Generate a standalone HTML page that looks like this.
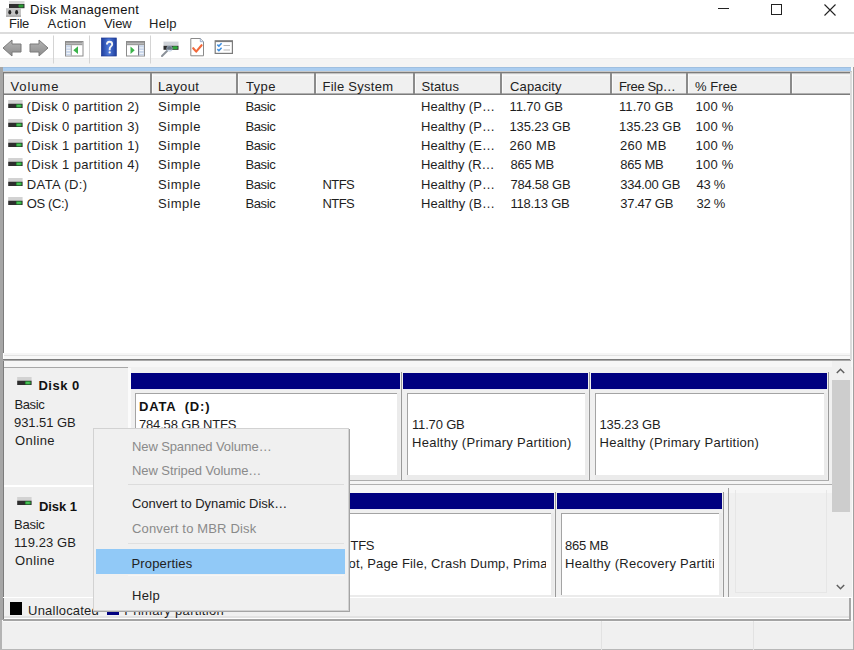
<!DOCTYPE html><html><head><meta charset='utf-8'><style>
*{margin:0;padding:0;box-sizing:border-box}
html,body{width:854px;height:650px;overflow:hidden;background:#fff}
body{position:relative;font-family:"Liberation Sans",sans-serif;color:#000}
.t{position:absolute;white-space:pre}
.r{position:absolute}
.c{position:absolute;overflow:hidden}
svg{position:absolute;overflow:visible}
</style></head><body>
<div class="t" style="left:30.00px;top:3.20px;font-size:13px;line-height:13px;color:#111;letter-spacing:0.286px;">Disk Management</div>
<div class="r" style="left:718px;top:8px;width:11px;height:1px;background:#222;"></div>
<div class="r" style="left:771px;top:4px;width:11px;height:11px;background:transparent;border:1px solid #222"></div>
<svg style="left:824px;top:4px" width="12" height="12"><path d="M0.5 0.5L11.5 11.5M11.5 0.5L0.5 11.5" stroke="#222" stroke-width="1.1"/></svg>
<div class="t" style="left:9.00px;top:17.20px;font-size:13px;line-height:13px;color:#222;letter-spacing:-0.199px;">File</div>
<div class="t" style="left:47.50px;top:17.20px;font-size:13px;line-height:13px;color:#222;letter-spacing:0.480px;">Action</div>
<div class="t" style="left:104.00px;top:17.20px;font-size:13px;line-height:13px;color:#222;letter-spacing:-0.067px;">View</div>
<div class="t" style="left:149.00px;top:17.20px;font-size:13px;line-height:13px;color:#222;letter-spacing:0.268px;">Help</div>
<div class="r" style="left:0px;top:32px;width:854px;height:2px;background:#dcdcdc;"></div>
<div class="r" style="left:0px;top:58px;width:854px;height:1px;background:#efefef;"></div>
<div class="r" style="left:0px;top:59px;width:854px;height:8px;background:#f4f4f4;"></div>
<div class="r" style="left:2px;top:67px;width:850px;height:1px;background:#9fbfe0;"></div>
<div class="r" style="left:2px;top:68px;width:850px;height:3px;background:#aacdf0;"></div>
<div class="r" style="left:0px;top:67px;width:3px;height:553px;background:#a6a6a6;"></div>
<div class="r" style="left:853px;top:67px;width:1px;height:553px;background:#a0a0a0;"></div>
<div class="r" style="left:851px;top:67px;width:2px;height:553px;background:#fafafa;"></div>
<div class="r" style="left:3px;top:71px;width:849px;height:1px;background:#c8c8c8;"></div>
<div class="r" style="left:3px;top:72px;width:848px;height:1px;background:#7c7c7c;"></div>
<div class="r" style="left:3px;top:72px;width:1px;height:281px;background:#7c7c7c;"></div>
<div class="r" style="left:4px;top:73px;width:847px;height:21px;background:#f0f0f0;"></div>
<div class="r" style="left:4px;top:73px;width:847px;height:1px;background:#c4c4c4;"></div>
<div class="r" style="left:4px;top:75px;width:847px;height:1px;background:#f7f7f7;"></div>
<div class="r" style="left:4px;top:93px;width:847px;height:1px;background:#b0b0b0;"></div>
<div class="r" style="left:4px;top:94px;width:847px;height:1px;background:#7c7c7c;"></div>
<div class="r" style="left:150px;top:73px;width:2px;height:21px;background:#8a8a8a;"></div>
<div class="r" style="left:152px;top:74px;width:1px;height:19px;background:#fafafa;"></div>
<div class="r" style="left:236px;top:73px;width:2px;height:21px;background:#8a8a8a;"></div>
<div class="r" style="left:238px;top:74px;width:1px;height:19px;background:#fafafa;"></div>
<div class="r" style="left:314px;top:73px;width:2px;height:21px;background:#8a8a8a;"></div>
<div class="r" style="left:316px;top:74px;width:1px;height:19px;background:#fafafa;"></div>
<div class="r" style="left:413px;top:73px;width:2px;height:21px;background:#8a8a8a;"></div>
<div class="r" style="left:415px;top:74px;width:1px;height:19px;background:#fafafa;"></div>
<div class="r" style="left:500px;top:73px;width:2px;height:21px;background:#8a8a8a;"></div>
<div class="r" style="left:502px;top:74px;width:1px;height:19px;background:#fafafa;"></div>
<div class="r" style="left:610px;top:73px;width:2px;height:21px;background:#8a8a8a;"></div>
<div class="r" style="left:612px;top:74px;width:1px;height:19px;background:#fafafa;"></div>
<div class="r" style="left:686px;top:73px;width:2px;height:21px;background:#8a8a8a;"></div>
<div class="r" style="left:688px;top:74px;width:1px;height:19px;background:#fafafa;"></div>
<div class="r" style="left:790px;top:73px;width:2px;height:21px;background:#8a8a8a;"></div>
<div class="r" style="left:792px;top:74px;width:1px;height:19px;background:#fafafa;"></div>
<div class="t" style="left:10.50px;top:79.70px;font-size:13px;line-height:13px;color:#222;letter-spacing:0.920px;">Volume</div>
<div class="t" style="left:158.00px;top:79.70px;font-size:13px;line-height:13px;color:#222;letter-spacing:0.360px;">Layout</div>
<div class="t" style="left:246.00px;top:79.70px;font-size:13px;line-height:13px;color:#222;letter-spacing:0.400px;">Type</div>
<div class="t" style="left:322.50px;top:79.70px;font-size:13px;line-height:13px;color:#222;letter-spacing:0.260px;">File System</div>
<div class="t" style="left:421.50px;top:79.70px;font-size:13px;line-height:13px;color:#222;letter-spacing:0.120px;">Status</div>
<div class="t" style="left:510.00px;top:79.70px;font-size:13px;line-height:13px;color:#222;letter-spacing:0.143px;">Capacity</div>
<div class="t" style="left:619.00px;top:79.70px;font-size:13px;line-height:13px;color:#222;letter-spacing:-0.371px;">Free Sp…</div>
<div class="t" style="left:695.00px;top:79.70px;font-size:13px;line-height:13px;color:#222;letter-spacing:0.080px;">% Free</div>
<svg style="left:8px;top:100.0px" width="16" height="9"><rect x="0.2" y="0" width="14.4" height="3.7" fill="#d2d2d2"/><rect x="0.2" y="3.7" width="14.4" height="4.3" fill="#2e2e2e"/><rect x="8.0" y="4.2" width="5.8" height="3.4" rx="1" fill="#279a35"/><rect x="9.1" y="5" width="3.6" height="1.8" fill="#4cc35a"/></svg>
<div class="t" style="left:26.60px;top:100.20px;font-size:13px;line-height:13px;color:#1e1e1e;letter-spacing:0.372px;">(Disk 0 partition 2)</div>
<div class="t" style="left:158.00px;top:100.20px;font-size:13px;line-height:13px;color:#1e1e1e;letter-spacing:0.560px;">Simple</div>
<div class="t" style="left:245.50px;top:100.20px;font-size:13px;line-height:13px;color:#1e1e1e;letter-spacing:-0.400px;">Basic</div>
<div class="t" style="left:421.00px;top:100.20px;font-size:13px;line-height:13px;color:#1e1e1e;letter-spacing:0.020px;">Healthy (P…</div>
<div class="t" style="left:509.50px;top:100.20px;font-size:13px;line-height:13px;color:#1e1e1e;letter-spacing:-0.078px;">11.70 GB</div>
<div class="t" style="left:619.00px;top:100.20px;font-size:13px;line-height:13px;color:#1e1e1e;letter-spacing:0.065px;">11.70 GB</div>
<div class="t" style="left:695.50px;top:100.20px;font-size:13px;line-height:13px;color:#1e1e1e;letter-spacing:0.250px;">100 %</div>
<svg style="left:8px;top:119.4px" width="16" height="9"><rect x="0.2" y="0" width="14.4" height="3.7" fill="#d2d2d2"/><rect x="0.2" y="3.7" width="14.4" height="4.3" fill="#2e2e2e"/><rect x="8.0" y="4.2" width="5.8" height="3.4" rx="1" fill="#279a35"/><rect x="9.1" y="5" width="3.6" height="1.8" fill="#4cc35a"/></svg>
<div class="t" style="left:26.60px;top:119.60px;font-size:13px;line-height:13px;color:#1e1e1e;letter-spacing:0.372px;">(Disk 0 partition 3)</div>
<div class="t" style="left:158.00px;top:119.60px;font-size:13px;line-height:13px;color:#1e1e1e;letter-spacing:0.560px;">Simple</div>
<div class="t" style="left:245.50px;top:119.60px;font-size:13px;line-height:13px;color:#1e1e1e;letter-spacing:-0.400px;">Basic</div>
<div class="t" style="left:421.00px;top:119.60px;font-size:13px;line-height:13px;color:#1e1e1e;letter-spacing:0.020px;">Healthy (P…</div>
<div class="t" style="left:509.50px;top:119.60px;font-size:13px;line-height:13px;color:#1e1e1e;letter-spacing:-0.125px;">135.23 GB</div>
<div class="t" style="left:619.00px;top:119.60px;font-size:13px;line-height:13px;color:#1e1e1e;">135.23 GB</div>
<div class="t" style="left:695.50px;top:119.60px;font-size:13px;line-height:13px;color:#1e1e1e;letter-spacing:0.250px;">100 %</div>
<svg style="left:8px;top:138.8px" width="16" height="9"><rect x="0.2" y="0" width="14.4" height="3.7" fill="#d2d2d2"/><rect x="0.2" y="3.7" width="14.4" height="4.3" fill="#2e2e2e"/><rect x="8.0" y="4.2" width="5.8" height="3.4" rx="1" fill="#279a35"/><rect x="9.1" y="5" width="3.6" height="1.8" fill="#4cc35a"/></svg>
<div class="t" style="left:26.60px;top:139.00px;font-size:13px;line-height:13px;color:#1e1e1e;letter-spacing:0.372px;">(Disk 1 partition 1)</div>
<div class="t" style="left:158.00px;top:139.00px;font-size:13px;line-height:13px;color:#1e1e1e;letter-spacing:0.560px;">Simple</div>
<div class="t" style="left:245.50px;top:139.00px;font-size:13px;line-height:13px;color:#1e1e1e;letter-spacing:-0.400px;">Basic</div>
<div class="t" style="left:421.00px;top:139.00px;font-size:13px;line-height:13px;color:#1e1e1e;letter-spacing:0.020px;">Healthy (E…</div>
<div class="t" style="left:509.50px;top:139.00px;font-size:13px;line-height:13px;color:#1e1e1e;letter-spacing:0.310px;">260 MB</div>
<div class="t" style="left:620.00px;top:139.00px;font-size:13px;line-height:13px;color:#1e1e1e;letter-spacing:0.310px;">260 MB</div>
<div class="t" style="left:695.50px;top:139.00px;font-size:13px;line-height:13px;color:#1e1e1e;letter-spacing:0.250px;">100 %</div>
<svg style="left:8px;top:158.2px" width="16" height="9"><rect x="0.2" y="0" width="14.4" height="3.7" fill="#d2d2d2"/><rect x="0.2" y="3.7" width="14.4" height="4.3" fill="#2e2e2e"/><rect x="8.0" y="4.2" width="5.8" height="3.4" rx="1" fill="#279a35"/><rect x="9.1" y="5" width="3.6" height="1.8" fill="#4cc35a"/></svg>
<div class="t" style="left:26.60px;top:158.40px;font-size:13px;line-height:13px;color:#1e1e1e;letter-spacing:0.372px;">(Disk 1 partition 4)</div>
<div class="t" style="left:158.00px;top:158.40px;font-size:13px;line-height:13px;color:#1e1e1e;letter-spacing:0.560px;">Simple</div>
<div class="t" style="left:245.50px;top:158.40px;font-size:13px;line-height:13px;color:#1e1e1e;letter-spacing:-0.400px;">Basic</div>
<div class="t" style="left:421.00px;top:158.40px;font-size:13px;line-height:13px;color:#1e1e1e;letter-spacing:-0.080px;">Healthy (R…</div>
<div class="t" style="left:510.50px;top:158.40px;font-size:13px;line-height:13px;color:#1e1e1e;letter-spacing:-0.250px;">865 MB</div>
<div class="t" style="left:620.20px;top:158.40px;font-size:13px;line-height:13px;color:#1e1e1e;letter-spacing:-0.250px;">865 MB</div>
<div class="t" style="left:695.50px;top:158.40px;font-size:13px;line-height:13px;color:#1e1e1e;letter-spacing:0.250px;">100 %</div>
<svg style="left:8px;top:177.6px" width="16" height="9"><rect x="0.2" y="0" width="14.4" height="3.7" fill="#d2d2d2"/><rect x="0.2" y="3.7" width="14.4" height="4.3" fill="#2e2e2e"/><rect x="8.0" y="4.2" width="5.8" height="3.4" rx="1" fill="#279a35"/><rect x="9.1" y="5" width="3.6" height="1.8" fill="#4cc35a"/></svg>
<div class="t" style="left:26.80px;top:177.80px;font-size:13px;line-height:13px;color:#1e1e1e;letter-spacing:0.375px;">DATA (D:)</div>
<div class="t" style="left:158.00px;top:177.80px;font-size:13px;line-height:13px;color:#1e1e1e;letter-spacing:0.560px;">Simple</div>
<div class="t" style="left:245.50px;top:177.80px;font-size:13px;line-height:13px;color:#1e1e1e;letter-spacing:-0.400px;">Basic</div>
<div class="t" style="left:322.50px;top:177.80px;font-size:13px;line-height:13px;color:#1e1e1e;letter-spacing:-0.600px;">NTFS</div>
<div class="t" style="left:421.00px;top:177.80px;font-size:13px;line-height:13px;color:#1e1e1e;letter-spacing:0.020px;">Healthy (P…</div>
<div class="t" style="left:510.50px;top:177.80px;font-size:13px;line-height:13px;color:#1e1e1e;letter-spacing:-0.250px;">784.58 GB</div>
<div class="t" style="left:620.20px;top:177.80px;font-size:13px;line-height:13px;color:#1e1e1e;letter-spacing:-0.250px;">334.00 GB</div>
<div class="t" style="left:696.50px;top:177.80px;font-size:13px;line-height:13px;color:#1e1e1e;letter-spacing:-0.250px;">43 %</div>
<svg style="left:8px;top:197.0px" width="16" height="9"><rect x="0.2" y="0" width="14.4" height="3.7" fill="#d2d2d2"/><rect x="0.2" y="3.7" width="14.4" height="4.3" fill="#2e2e2e"/><rect x="8.0" y="4.2" width="5.8" height="3.4" rx="1" fill="#279a35"/><rect x="9.1" y="5" width="3.6" height="1.8" fill="#4cc35a"/></svg>
<div class="t" style="left:26.80px;top:197.20px;font-size:13px;line-height:13px;color:#1e1e1e;letter-spacing:-0.366px;">OS (C:)</div>
<div class="t" style="left:158.00px;top:197.20px;font-size:13px;line-height:13px;color:#1e1e1e;letter-spacing:0.560px;">Simple</div>
<div class="t" style="left:245.50px;top:197.20px;font-size:13px;line-height:13px;color:#1e1e1e;letter-spacing:-0.400px;">Basic</div>
<div class="t" style="left:322.50px;top:197.20px;font-size:13px;line-height:13px;color:#1e1e1e;letter-spacing:-0.600px;">NTFS</div>
<div class="t" style="left:421.00px;top:197.20px;font-size:13px;line-height:13px;color:#1e1e1e;letter-spacing:0.020px;">Healthy (B…</div>
<div class="t" style="left:510.50px;top:197.20px;font-size:13px;line-height:13px;color:#1e1e1e;letter-spacing:-0.250px;">118.13 GB</div>
<div class="t" style="left:620.20px;top:197.20px;font-size:13px;line-height:13px;color:#1e1e1e;letter-spacing:-0.250px;">37.47 GB</div>
<div class="t" style="left:696.50px;top:197.20px;font-size:13px;line-height:13px;color:#1e1e1e;letter-spacing:-0.250px;">32 %</div>
<div class="r" style="left:4px;top:353px;width:847px;height:2px;background:#f6f6f6;"></div>
<div class="r" style="left:4px;top:355px;width:847px;height:1px;background:#e2e2e2;"></div>
<div class="r" style="left:4px;top:356px;width:848px;height:3px;background:#f8f8f8;"></div>
<div class="r" style="left:3px;top:359px;width:848px;height:1px;background:#7c7c7c;"></div>
<div class="r" style="left:3px;top:360px;width:848px;height:1px;background:#a8a8a8;"></div>
<div class="r" style="left:4px;top:361px;width:848px;height:6px;background:#f6f6f6;"></div>
<div class="r" style="left:850px;top:72px;width:2px;height:288px;background:#dcdcdc;"></div>
<div class="r" style="left:3px;top:367px;width:849px;height:231px;background:#f0f0f0;"></div>
<div class="r" style="left:3px;top:361px;width:1px;height:259px;background:#7c7c7c;"></div>
<div class="r" style="left:4px;top:367px;width:124px;height:1px;background:#a8a8a8;"></div>
<div class="r" style="left:4px;top:485px;width:124px;height:2px;background:#ffffff;"></div>
<div class="r" style="left:128px;top:368px;width:3px;height:229px;background:#fbfbfb;"></div>
<div class="r" style="left:131px;top:373px;width:269px;height:16px;background:#000080;"></div>
<div class="r" style="left:131px;top:389px;width:269px;height:1px;background:#e8e8f4;"></div>
<div class="r" style="left:401px;top:372px;width:1px;height:108px;background:#9a9a9a;"></div>
<div class="r" style="left:135px;top:393px;width:265px;height:87px;background:#ebebeb;"></div>
<div class="r" style="left:135px;top:393px;width:262px;height:1px;background:#a4a4a4;"></div>
<div class="r" style="left:135px;top:393px;width:1px;height:82px;background:#a4a4a4;"></div>
<div class="r" style="left:136px;top:394px;width:261px;height:81px;background:#ffffff;"></div>
<div class="r" style="left:403px;top:373px;width:185px;height:16px;background:#000080;"></div>
<div class="r" style="left:403px;top:389px;width:185px;height:1px;background:#e8e8f4;"></div>
<div class="r" style="left:589px;top:372px;width:1px;height:108px;background:#9a9a9a;"></div>
<div class="r" style="left:407px;top:393px;width:181px;height:87px;background:#ebebeb;"></div>
<div class="r" style="left:407px;top:393px;width:178px;height:1px;background:#a4a4a4;"></div>
<div class="r" style="left:407px;top:393px;width:1px;height:82px;background:#a4a4a4;"></div>
<div class="r" style="left:408px;top:394px;width:177px;height:81px;background:#ffffff;"></div>
<div class="r" style="left:591px;top:373px;width:236px;height:16px;background:#000080;"></div>
<div class="r" style="left:591px;top:389px;width:236px;height:1px;background:#e8e8f4;"></div>
<div class="r" style="left:828px;top:372px;width:1px;height:108px;background:#9a9a9a;"></div>
<div class="r" style="left:595px;top:393px;width:232px;height:87px;background:#ebebeb;"></div>
<div class="r" style="left:595px;top:393px;width:229px;height:1px;background:#a4a4a4;"></div>
<div class="r" style="left:595px;top:393px;width:1px;height:82px;background:#a4a4a4;"></div>
<div class="r" style="left:596px;top:394px;width:228px;height:81px;background:#ffffff;"></div>
<div class="r" style="left:131px;top:481px;width:698px;height:3px;background:#f4f4f4;"></div>
<div class="r" style="left:131px;top:485px;width:701px;height:8px;background:#f6f6f6;"></div>
<div class="r" style="left:131px;top:480px;width:698px;height:1px;background:#acacac;"></div>
<div class="r" style="left:131px;top:484px;width:701px;height:1px;background:#b0b0b0;"></div>
<div class="t" style="left:139.00px;top:400.20px;font-size:13px;line-height:13px;font-weight:700;color:#111;letter-spacing:0.801px;">DATA  (D:)</div>
<div class="t" style="left:139.00px;top:417.90px;font-size:13px;line-height:13px;color:#1e1e1e;letter-spacing:-0.170px;">784.58 GB NTFS</div>
<div class="t" style="left:412.00px;top:418.20px;font-size:13px;line-height:13px;color:#1e1e1e;letter-spacing:-0.172px;">11.70 GB</div>
<div class="t" style="left:412.00px;top:436.20px;font-size:13px;line-height:13px;color:#1e1e1e;letter-spacing:0.269px;">Healthy (Primary Partition)</div>
<div class="t" style="left:599.50px;top:418.20px;font-size:13px;line-height:13px;color:#1e1e1e;letter-spacing:-0.125px;">135.23 GB</div>
<div class="t" style="left:599.50px;top:436.20px;font-size:13px;line-height:13px;color:#1e1e1e;letter-spacing:0.269px;">Healthy (Primary Partition)</div>
<svg style="left:17px;top:377px" width="16" height="9"><rect x="0.2" y="0" width="14.4" height="3.7" fill="#d2d2d2"/><rect x="0.2" y="3.7" width="14.4" height="4.3" fill="#2e2e2e"/><rect x="8.0" y="4.2" width="5.8" height="3.4" rx="1" fill="#279a35"/><rect x="9.1" y="5" width="3.6" height="1.8" fill="#4cc35a"/></svg>
<div class="t" style="left:38.50px;top:379.20px;font-size:13px;line-height:13px;font-weight:700;color:#111;letter-spacing:0.480px;">Disk 0</div>
<div class="t" style="left:14.50px;top:397.70px;font-size:13px;line-height:13px;color:#1e1e1e;letter-spacing:-0.400px;">Basic</div>
<div class="t" style="left:14.00px;top:415.80px;font-size:13px;line-height:13px;color:#1e1e1e;letter-spacing:-0.048px;">931.51 GB</div>
<div class="t" style="left:15.00px;top:434.20px;font-size:13px;line-height:13px;color:#1e1e1e;letter-spacing:0.400px;">Online</div>
<div class="c" style="left:0;top:0;width:854px;height:597px"><div class="r" style="left:131px;top:493px;width:137px;height:16px;background:#000080;"></div>
<div class="r" style="left:131px;top:509px;width:137px;height:1px;background:#e8e8f4;"></div>
<div class="r" style="left:269px;top:492px;width:1px;height:108px;background:#9a9a9a;"></div>
<div class="r" style="left:135px;top:513px;width:133px;height:87px;background:#ebebeb;"></div>
<div class="r" style="left:135px;top:513px;width:130px;height:1px;background:#a4a4a4;"></div>
<div class="r" style="left:135px;top:513px;width:1px;height:82px;background:#a4a4a4;"></div>
<div class="r" style="left:136px;top:514px;width:129px;height:81px;background:#ffffff;"></div>
<div class="r" style="left:271px;top:493px;width:283px;height:16px;background:#000080;"></div>
<div class="r" style="left:271px;top:509px;width:283px;height:1px;background:#e8e8f4;"></div>
<div class="r" style="left:555px;top:492px;width:1px;height:108px;background:#9a9a9a;"></div>
<div class="r" style="left:275px;top:513px;width:279px;height:87px;background:#ebebeb;"></div>
<div class="r" style="left:275px;top:513px;width:276px;height:1px;background:#a4a4a4;"></div>
<div class="r" style="left:275px;top:513px;width:1px;height:82px;background:#a4a4a4;"></div>
<div class="r" style="left:276px;top:514px;width:275px;height:81px;background:#ffffff;"></div>
<div class="r" style="left:557px;top:493px;width:165px;height:16px;background:#000080;"></div>
<div class="r" style="left:557px;top:509px;width:165px;height:1px;background:#e8e8f4;"></div>
<div class="r" style="left:723px;top:492px;width:1px;height:108px;background:#9a9a9a;"></div>
<div class="r" style="left:561px;top:513px;width:161px;height:87px;background:#ebebeb;"></div>
<div class="r" style="left:561px;top:513px;width:158px;height:1px;background:#a4a4a4;"></div>
<div class="r" style="left:561px;top:513px;width:1px;height:82px;background:#a4a4a4;"></div>
<div class="r" style="left:562px;top:514px;width:157px;height:81px;background:#ffffff;"></div>
<div class="r" style="left:728px;top:488px;width:1px;height:110px;background:#a0a0a0;"></div>
<div class="r" style="left:735px;top:490px;width:1px;height:103px;background:#e6e6e6;"></div>
<div class="r" style="left:826px;top:490px;width:1px;height:103px;background:#e6e6e6;"></div>
<div class="r" style="left:735px;top:592px;width:92px;height:1px;background:#e6e6e6;"></div>
</div>
<div class="c" style="left:279px;top:515px;width:266.5px;height:80px"><div class="t" style="left:0.00px;top:23.70px;font-size:13px;line-height:13px;color:#1e1e1e;letter-spacing:-0.250px;">118.13 GB NTFS</div>
<div class="t" style="left:0.00px;top:41.70px;font-size:13px;line-height:13px;color:#1e1e1e;letter-spacing:0.150px;">Healthy (Boot, Page File, Crash Dump, Primary Partition)</div>
</div>
<div class="c" style="left:565px;top:515px;width:149px;height:80px"><div class="t" style="left:0.00px;top:23.70px;font-size:13px;line-height:13px;color:#1e1e1e;letter-spacing:-0.250px;">865 MB</div>
<div class="t" style="left:0.00px;top:41.70px;font-size:13px;line-height:13px;color:#1e1e1e;letter-spacing:0.250px;">Healthy (Recovery Partition)</div>
</div>
<svg style="left:17px;top:497px" width="16" height="9"><rect x="0.2" y="0" width="14.4" height="3.7" fill="#d2d2d2"/><rect x="0.2" y="3.7" width="14.4" height="4.3" fill="#2e2e2e"/><rect x="8.0" y="4.2" width="5.8" height="3.4" rx="1" fill="#279a35"/><rect x="9.1" y="5" width="3.6" height="1.8" fill="#4cc35a"/></svg>
<div class="t" style="left:39.00px;top:499.60px;font-size:13px;line-height:13px;font-weight:700;color:#111;letter-spacing:-0.080px;">Disk 1</div>
<div class="t" style="left:14.00px;top:517.70px;font-size:13px;line-height:13px;color:#1e1e1e;letter-spacing:-0.250px;">Basic</div>
<div class="t" style="left:14.00px;top:535.70px;font-size:13px;line-height:13px;color:#1e1e1e;letter-spacing:0.077px;">119.23 GB</div>
<div class="t" style="left:15.00px;top:554.20px;font-size:13px;line-height:13px;color:#1e1e1e;letter-spacing:0.400px;">Online</div>
<div class="r" style="left:832px;top:361px;width:19px;height:237px;background:#f0f0f0;"></div>
<svg style="left:836px;top:368px" width="9" height="6"><path d="M0.8 5L4.5 1.3L8.2 5" fill="none" stroke="#606060" stroke-width="1.5"/></svg>
<div class="r" style="left:832px;top:380px;width:18px;height:132px;background:#cdcdcd;"></div>
<svg style="left:836px;top:584px" width="9" height="6"><path d="M0.8 1L4.5 4.7L8.2 1" fill="none" stroke="#606060" stroke-width="1.5"/></svg>
<div class="r" style="left:3px;top:597px;width:849px;height:1px;background:#ffffff;"></div>
<div class="r" style="left:4px;top:598px;width:846px;height:20px;background:#f0f0f0;"></div>
<div class="r" style="left:849px;top:598px;width:2px;height:21px;background:#a8a8a8;"></div>
<div class="r" style="left:4px;top:616px;width:845px;height:2px;background:#e2e2e2;"></div>
<div class="r" style="left:3px;top:619px;width:848px;height:2px;background:#a4a4a4;"></div>
<div class="r" style="left:10px;top:602px;width:12px;height:13px;background:#000;"></div>
<div class="t" style="left:28.10px;top:603.70px;font-size:13px;line-height:13px;color:#1e1e1e;letter-spacing:0.200px;">Unallocated</div>
<div class="r" style="left:107px;top:603px;width:12px;height:12px;background:#000080;"></div>
<div class="t" style="left:124.30px;top:603.70px;font-size:13px;line-height:13px;color:#1e1e1e;letter-spacing:0.300px;">Primary partition</div>
<div class="r" style="left:0px;top:621px;width:854px;height:29px;background:#f0f0f0;"></div>
<div class="r" style="left:3px;top:621px;width:849px;height:1px;background:#f8f8f8;"></div>
<div class="r" style="left:0px;top:620px;width:2px;height:30px;background:#b4b4b4;"></div>
<div class="r" style="left:0px;top:649px;width:854px;height:1px;background:#b8b8b8;"></div>
<div class="r" style="left:601px;top:621px;width:1px;height:29px;background:#e2e2e2;"></div>
<div class="r" style="left:753px;top:621px;width:1px;height:29px;background:#e2e2e2;"></div>
<div class="r" style="left:853px;top:620px;width:1px;height:30px;background:#b0b0b0;"></div>
<div class="r" style="left:93px;top:428px;width:256px;height:183px;background:#f0f0f0;border:1px solid #d2d2d2;box-shadow:1px 1px 0 #a4a4a4"></div>
<div class="t" style="left:132.00px;top:440.00px;font-size:13px;line-height:13px;color:#8a8a8a;letter-spacing:-0.111px;">New Spanned Volume…</div>
<div class="t" style="left:132.00px;top:464.20px;font-size:13px;line-height:13px;color:#8a8a8a;letter-spacing:-0.079px;">New Striped Volume…</div>
<div class="r" style="left:128px;top:484px;width:216px;height:1px;background:#dcdcdc;"></div>
<div class="t" style="left:132.00px;top:497.20px;font-size:13px;line-height:13px;color:#222;letter-spacing:-0.034px;">Convert to Dynamic Disk…</div>
<div class="t" style="left:132.00px;top:522.20px;font-size:13px;line-height:13px;color:#8a8a8a;letter-spacing:0.155px;">Convert to MBR Disk</div>
<div class="r" style="left:128px;top:543px;width:216px;height:1px;background:#e0e0e0;"></div>
<div class="r" style="left:96px;top:549px;width:249px;height:25px;background:#91c9f7;"></div>
<div class="t" style="left:131.50px;top:556.70px;font-size:13px;line-height:13px;color:#222;letter-spacing:0.155px;">Properties</div>
<div class="r" style="left:128px;top:575px;width:216px;height:1px;background:#f6f6f6;"></div>
<div class="t" style="left:132.00px;top:589.20px;font-size:13px;line-height:13px;color:#222;letter-spacing:0.334px;">Help</div>
<svg style="left:0;top:0" width="854" height="66"><defs><linearGradient id="hb" x1="0" y1="0" x2="1" y2="0"><stop offset="0" stop-color="#1f3f9e"/><stop offset="0.5" stop-color="#4d78d8"/><stop offset="1" stop-color="#1f3f9e"/></linearGradient><linearGradient id="ar" x1="0" y1="0" x2="0" y2="1"><stop offset="0" stop-color="#b4b4b4"/><stop offset="1" stop-color="#8c8c8c"/></linearGradient></defs><rect x="9" y="1" width="15.5" height="3" fill="#d8d8d8"/><rect x="9" y="4" width="15.5" height="4.2" fill="#303030"/><rect x="18.5" y="4.6" width="5" height="3" rx="1" fill="#2b9a35"/><rect x="6" y="8.2" width="15" height="8.5" fill="#c4c4c4"/><rect x="6" y="15.5" width="15" height="1.2" fill="#a0a0a0"/><ellipse cx="9.8" cy="12.2" rx="1.5" ry="2.2" fill="#262626"/><ellipse cx="16.6" cy="12.2" rx="1.5" ry="2.2" fill="#262626"/><path d="M3 48L12 40V44H21V52H12V56Z" fill="url(#ar)" stroke="#7a7a7a" stroke-width="1" stroke-linejoin="round"/><path d="M48 48L39 40V44H30V52H39V56Z" fill="url(#ar)" stroke="#7a7a7a" stroke-width="1" stroke-linejoin="round"/><rect x="53" y="35.5" width="1" height="28" fill="#d4d4d4"/><rect x="65.5" y="41.5" width="17.5" height="14.5" fill="#fff" stroke="#8c8c8c"/><rect x="66" y="42" width="16.5" height="3.2" fill="#9c9c9c"/><rect x="66" y="43.2" width="16.5" height="0.8" fill="#c0c0c0"/><rect x="66" y="45.2" width="4.8" height="10.3" fill="#c9d6ea"/><rect x="66.5" y="47.5" width="4" height="0.8" fill="#fff"/><rect x="66.5" y="50.2" width="4" height="0.8" fill="#fff"/><rect x="66.5" y="52.9" width="4" height="0.8" fill="#fff"/><rect x="70.8" y="45.2" width="1" height="10.3" fill="#9a9a9a"/><path d="M78 46.3L73.3 50.2L78 54Z" fill="#3bb34a"/><rect x="89" y="35.5" width="1" height="28" fill="#d4d4d4"/><rect x="101.5" y="38" width="14.8" height="18" fill="url(#hb)"/><rect x="101.5" y="38" width="14.8" height="18" fill="none" stroke="#1a3590" stroke-width="0.7"/><path d="M106.9 44.6C106.9 42.5 108.2 41.7 109.5 41.7C111 41.7 112.2 42.6 112.2 44.2C112.2 46.2 109.7 46.6 109.7 48.7V50.2" fill="none" stroke="#f4f4f4" stroke-width="1.9"/><circle cx="109.7" cy="52.4" r="1.15" fill="#f4f4f4"/><rect x="126.5" y="41.5" width="18" height="14.5" fill="#fff" stroke="#8c8c8c"/><rect x="127" y="42" width="17" height="3.2" fill="#9c9c9c"/><rect x="127" y="43.2" width="17" height="0.8" fill="#c0c0c0"/><path d="M130.5 46.5L134.7 50.3L130.5 54Z" fill="#3bb34a"/><rect x="138.2" y="45.2" width="1.1" height="10.3" fill="#50506a"/><rect x="139.3" y="45.2" width="4.7" height="10.3" fill="#c9d6ea"/><rect x="139.5" y="47.5" width="4" height="0.8" fill="#fff"/><rect x="139.5" y="50.2" width="4" height="0.8" fill="#fff"/><rect x="139.5" y="52.9" width="4" height="0.8" fill="#fff"/><rect x="150" y="35.5" width="1" height="28" fill="#d4d4d4"/><rect x="163.5" y="41.6" width="15" height="4.2" fill="#cfd3d8"/><rect x="163.5" y="45.8" width="15" height="4" fill="#2c2c2c"/><rect x="172.5" y="46.3" width="5.2" height="3" rx="1" fill="#2ea83a"/><path d="M162 56L167 51" stroke="#8a9098" stroke-width="2" stroke-linecap="round"/><circle cx="169.5" cy="48.5" r="2.8" fill="#b8d0ec" fill-opacity="0.45" stroke="#a8bcd4" stroke-width="0.6"/><path d="M190.8 38.5H200.3L203.5 41.7V55.8H190.8Z" fill="#fff" stroke="#8a8a8a" stroke-width="1"/><path d="M200.3 38.5V41.7H203.5" fill="#dfe8f4" stroke="#8aa0c0" stroke-width="0.8"/><path d="M193.2 48.2L196.2 51.6L201.6 45.2" fill="none" stroke="#f2683a" stroke-width="2.1" stroke-linecap="round" stroke-linejoin="round"/><rect x="215.2" y="40.8" width="17.2" height="12.6" fill="#fff" stroke="#7c7c7c" stroke-width="1.2"/><rect x="215.2" y="40.8" width="17.2" height="1.3" fill="#7c7c7c"/><path d="M217.3 44.6L218.9 46.1L221.6 43.2M217.3 49.1L218.9 50.6L221.6 47.7" fill="none" stroke="#3f8fe0" stroke-width="1.5"/><rect x="223.5" y="45" width="6.5" height="1" fill="#b8b8b8"/><rect x="223.5" y="49.5" width="6.5" height="1" fill="#b8b8b8"/></svg>
</body></html>
